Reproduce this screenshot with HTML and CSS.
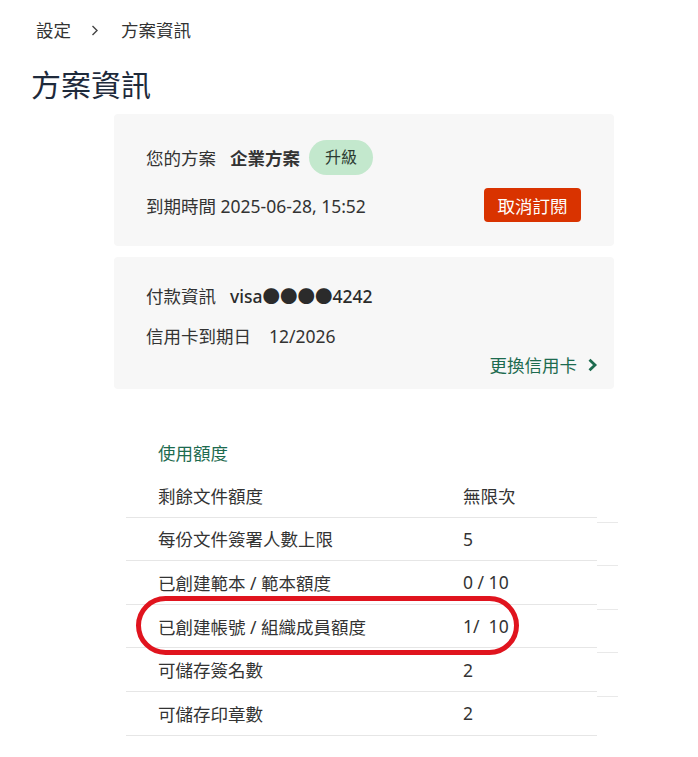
FILE: index.html
```html
<!DOCTYPE html>
<html lang="zh-Hant">
<head>
<meta charset="utf-8">
<title>方案資訊</title>
<link rel="stylesheet" href="styles.css">
</head>
<body>
<nav class="crumbs">
  <span class="crumb">設定</span>
  <svg class="crumb-sep" width="8" height="11" viewBox="0 0 8 11"><polyline points="1.5,1 6,5.5 1.5,10" fill="none" stroke="#444" stroke-width="1.4"/></svg>
  <span class="crumb">方案資訊</span>
</nav>
<h1 class="title">方案資訊</h1>
<main class="column">
  <section class="card plan">
    <div class="row row-plan">
      <span class="label">您的方案</span>
      <strong class="plan-name">企業方案</strong>
      <span class="badge">升級</span>
    </div>
    <div class="row row-expire">
      <span>到期時間 2025-06-28, 15:52</span>
      <button class="btn-cancel">取消訂閱</button>
    </div>
  </section>
  <section class="card pay">
    <div class="line">
      <span class="label">付款資訊</span>
      <span class="card-num">visa●●●●4242</span>
    </div>
    <div class="line">
      <span class="label">信用卡到期日</span>
      <span class="card-exp">12/2026</span>
    </div>
    <div class="line link-line">
      <a class="link">更換信用卡</a>
      <svg class="link-chev" width="11" height="14" viewBox="0 0 11 14"><polyline points="2.5,1.8 8,7 2.5,12.2" fill="none" stroke="#1d6b4f" stroke-width="2.8"/></svg>
    </div>
  </section>
</main>
<section class="usage">
  <h2 class="usage-title">使用額度</h2>
  <div class="table">
    <div class="trow"><div class="cells"><span class="k">剩餘文件額度</span><span class="v">無限次</span></div><div class="tail"></div></div>
    <div class="trow"><div class="cells"><span class="k">每份文件簽署人數上限</span><span class="v">5</span></div><div class="tail"></div></div>
    <div class="trow"><div class="cells"><span class="k">已創建範本 / 範本額度</span><span class="v">0 / 10</span></div><div class="tail"></div></div>
    <div class="trow"><div class="cells"><span class="k">已創建帳號 / 組織成員額度</span><span class="v">1/ &nbsp;10</span></div><div class="tail"></div></div>
    <div class="trow"><div class="cells"><span class="k">可儲存簽名數</span><span class="v">2</span></div><div class="tail"></div></div>
    <div class="trow"><div class="cells"><span class="k">可儲存印章數</span><span class="v">2</span></div><div class="tail"></div></div>
    <div class="highlight"></div>
  </div>
</section>
</body>
</html>
```
FILE: styles.css
```css
* { box-sizing: border-box; }
body {
  margin: 0;
  background: #fff;
  color: #333;
  font-family: "Noto Sans", "Noto Sans CJK TC", sans-serif;
  font-size: 17.5px;
}
.crumbs {
  display: flex;
  align-items: center;
  height: 24px;
  margin-top: 18px;
  padding-left: 36px;
  line-height: 24px;
  color: #333;
}
.crumb-sep { margin: 0 22px 0 20px; }
.title {
  margin: 23px 0 0 31px;
  font-size: 30px;
  line-height: 40px;
  font-weight: 400;
  color: #1e2a3b;
}
.column {
  width: 500px;
  margin: 9px 0 0 114px;
  display: flex;
  flex-direction: column;
  gap: 11px;
}
.card {
  background: #f7f7f7;
  border-radius: 4px;
  height: 132px;
}
.plan { padding: 25px 33px 24px 32px; }
.row { display: flex; align-items: center; }
.row-plan { height: 36px; }
.plan-name { margin-left: 14px; font-weight: 700; }
.badge {
  margin-left: 9px;
  height: 35px;
  padding: 0 16px;
  border-radius: 18px;
  background: #c3e8cd;
  color: #2c3b31;
  font-size: 16px;
  line-height: 35px;
}
.row-expire { height: 34px; margin-top: 13px; justify-content: space-between; }
.btn-cancel {
  height: 34px;
  width: 97px;
  border: 0;
  border-radius: 4px;
  background: #d93300;
  color: #fff;
  font-family: inherit;
  font-size: 17.5px;
  padding: 0;
}
.pay { padding: 27px 16px 12px 32px; }
.line { display: flex; align-items: center; height: 24px; line-height: 24px; }
.line + .line { margin-top: 16px; }
.line + .link-line { margin-top: 5px; }
.card-num { margin-left: 14px; font-weight: 500; color: #2b2b2b; }
.card-exp { margin-left: 18px; }
.link-line { justify-content: flex-end; }
.link { color: #1d6b4f; cursor: pointer; }
.link-chev { margin-left: 10px; }
.usage {
  width: 492px;
  margin: 52px 0 0 126px;
}
.usage-title {
  margin: 0 0 0 32px;
  font-size: 17.5px;
  font-weight: 400;
  line-height: 24px;
  color: #1d6b4f;
}
.table { position: relative; margin-top: 9px; }
.trow { display: flex; height: 43.6px; }
.cells {
  flex: 0 0 471px;
  display: flex;
  align-items: center;
  border-bottom: 1px solid #e6e6e6;
}
.k { flex: 0 0 337px; padding-left: 32px; }
.v { color: #333; }
.tail {
  flex: 1;
  margin-bottom: -5px;
  border-bottom: 1px solid #e9e9e9;
}
.highlight {
  position: absolute;
  left: 10px;
  top: 122px;
  width: 383px;
  height: 59px;
  border: 5px solid #e0141e;
  border-radius: 30px;
}
```
